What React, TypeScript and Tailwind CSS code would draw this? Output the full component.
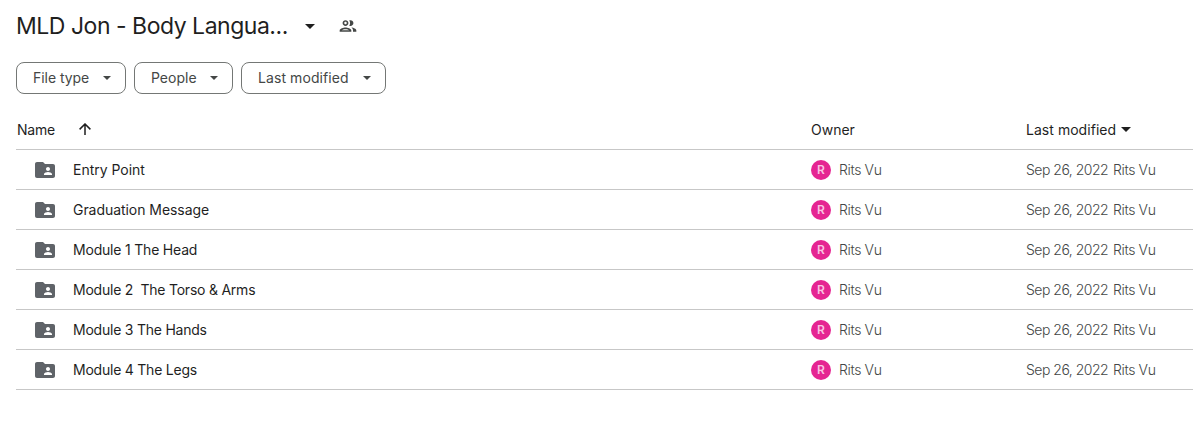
const folders = [
  { name: "Entry Point", tracking: "tracking-[-0.02px]" },
  { name: "Graduation Message", tracking: "tracking-[-0.05px]" },
  { name: "Module 1 The Head", tracking: "tracking-[-0.2px]" },
  { name: "Module 2  The Torso & Arms", tracking: "tracking-[-0.23px]" },
  { name: "Module 3 The Hands", tracking: "tracking-[-0.23px]" },
  { name: "Module 4 The Legs", tracking: "tracking-[-0.23px]" },
];

const filters = [
  { label: "File type", width: "w-[110px]", tracking: "tracking-[-0.05px]" },
  { label: "People", width: "w-[99px]", tracking: "tracking-[0px]" },
  { label: "Last modified", width: "w-[145px]", tracking: "tracking-[0.08px]" },
];

function Caret({ className }: { className: string }) {
  return (
    <svg viewBox="0 0 10 5" className={className} fill="currentColor" aria-hidden="true">
      <path d="M0 0h10L5 5z" />
    </svg>
  );
}

function PeopleIcon() {
  return (
    <svg viewBox="0 0 24 24" className="size-5 text-[#444746]" fill="currentColor" aria-hidden="true">
      <path d="M9 12c1.93 0 3.5-1.57 3.5-3.5S10.930 5 9 5 5.500 6.570 5.500 8.500 7.070 12 9 12zm0-5c.83 0 1.500.67 1.500 1.500S9.830 10 9 10s-1.500-.67-1.500-1.500S8.170 7 9 7zm0 6.750c-2.340 0-7 1.170-7 3.500V19h14v-1.750c0-2.330-4.660-3.500-7-3.500zM4.340 17c.84-.58 2.870-1.250 4.660-1.250s3.820.67 4.660 1.250H4.340zm11.700-3.190c1.160.84 1.960 1.960 1.960 3.440V19h4v-1.750c0-2.020-3.500-3.170-5.960-3.440zM15 12c1.930 0 3.500-1.570 3.500-3.500S16.930 5 15 5c-.54 0-1.040.13-1.500.35.63.89 1 1.980 1 3.150s-.37 2.260-1 3.150c.46.22.96.35 1.500.35z" />
    </svg>
  );
}

function SharedFolderIcon() {
  return (
    <svg viewBox="0 0 24 24" className="size-6 text-[#5f6368]" fill="currentColor" aria-hidden="true">
      <path d="M20 6h-8l-2-2H4c-1.100 0-1.990.9-1.990 2L2 18c0 1.100.9 2 2 2h16c1.100 0 2-.9 2-2V8c0-1.100-.9-2-2-2zm-5 3c1.100 0 2 .9 2 2s-.9 2-2 2-2-.9-2-2 .9-2 2-2zm4 8h-8v-1c0-1.330 2.670-2 4-2s4 .67 4 2v1z" />
    </svg>
  );
}

function ArrowUp() {
  return (
    <svg viewBox="0 0 12 12" className="ml-6 mt-[-2px] size-3 text-[#1f1f1f]" fill="none" stroke="currentColor" strokeWidth="1.5" aria-hidden="true">
      <path d="M6 12V1M.6 6.400 6 1l5.400 5.400" />
    </svg>
  );
}

export default function App() {
  return (
    <main className="h-[425px] overflow-hidden bg-white pl-4 font-['Inter',sans-serif] text-sm text-[#1f1f1f]">
      <header className="flex h-[52px] items-center">
        <h1 className="w-[289px] whitespace-nowrap text-[23px] tracking-[-0.48px]">MLD Jon - Body Langua...</h1>
        <Caret className="h-[5px] w-[10px]" />
        <div className="ml-[23px]">
          <PeopleIcon />
        </div>
      </header>

      <div className="mt-[10px] flex gap-2">
        {filters.map((f) => (
          <button
            key={f.label}
            className={`flex h-8 items-center justify-between rounded-lg border border-[#747775] pl-4 pr-[14px] text-[#444746] ${f.width}`}
          >
            <span className={`whitespace-nowrap ${f.tracking}`}>{f.label}</span>
            <Caret className="h-1 w-2" />
          </button>
        ))}
      </div>

      <section className="mt-4">
        <div className="grid h-10 grid-cols-[795px_215px_1fr] items-center border-b border-[#c7c7c7]">
          <div className="flex items-center pl-px">
            <span className="w-[38px] tracking-[-0.2px]">Name</span>
            <ArrowUp />
          </div>
          <span>Owner</span>
          <div className="flex items-center">
            <span className="w-[95px] tracking-[0.04px]">Last modified</span>
            <Caret className="h-[5px] w-[10px]" />
          </div>
        </div>
        {folders.map((f) => (
          <div key={f.name} className="grid h-10 grid-cols-[795px_215px_1fr] items-center border-b border-[#c7c7c7]">
            <div className="flex items-center gap-4 pl-[17px]">
              <SharedFolderIcon />
              <span className={`whitespace-pre ${f.tracking}`}>{f.name}</span>
            </div>
            <div className="flex items-center gap-2 font-light text-[#444746]">
              <span className="flex size-5 items-center justify-center rounded-full bg-[#e52592] text-xs font-semibold text-[#f9c4e2]">
                R
              </span>
              <span className="tracking-[-0.35px]">Rits Vu</span>
            </div>
            <div className="flex items-center whitespace-nowrap font-light text-[#444746]">
              <span className="w-[87px] tracking-[-0.5px]">Sep 26, 2022</span>
              <span className="tracking-[-0.35px]">Rits Vu</span>
            </div>
          </div>
        ))}
      </section>
    </main>
  );
}
